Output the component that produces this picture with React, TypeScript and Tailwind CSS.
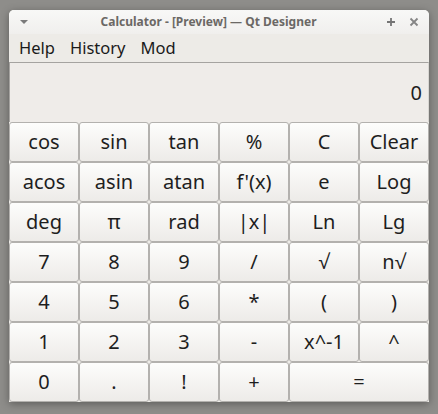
import React from 'react';

const rows: { label: string; span?: boolean }[][] = [
  [{ label: 'cos' }, { label: 'sin' }, { label: 'tan' }, { label: '%' }, { label: 'C' }, { label: 'Clear' }],
  [{ label: 'acos' }, { label: 'asin' }, { label: 'atan' }, { label: "f'(x)" }, { label: 'e' }, { label: 'Log' }],
  [{ label: 'deg' }, { label: 'π' }, { label: 'rad' }, { label: '|x|' }, { label: 'Ln' }, { label: 'Lg' }],
  [{ label: '7' }, { label: '8' }, { label: '9' }, { label: '/' }, { label: '√' }, { label: 'n√' }],
  [{ label: '4' }, { label: '5' }, { label: '6' }, { label: '*' }, { label: '(' }, { label: ')' }],
  [{ label: '1' }, { label: '2' }, { label: '3' }, { label: '-' }, { label: 'x^-1' }, { label: '^' }],
  [{ label: '0' }, { label: '.' }, { label: '!' }, { label: '+' }, { label: '=', span: true }],
];

function CalcButton({ label, span }: { label: string; span?: boolean }) {
  return (
    <button
      className={
        (span ? 'col-span-2 ' : '') +
        'h-[40px] border border-[#b3b1ae] rounded-[3px] bg-gradient-to-b from-[#fdfdfc] to-[#edebe8] text-[20px] text-[#1e1e1e] leading-none flex items-center justify-center'
      }
    >
      {label}
    </button>
  );
}

export default function App() {
  return (
    <div
      className="w-[438px] h-[414px] bg-[#8e8d8a] pt-[10px] pl-[9px] overflow-hidden"
      style={{ fontFamily: '"Noto Sans", "Open Sans", sans-serif' }}
    >
      <div className="w-[420px] rounded-t-[5px] bg-[#edebe7] shadow-[0_2px_8px_rgba(0,0,0,0.35)]">
        {/* title bar */}
        <div className="h-[24px] rounded-t-[5px] bg-gradient-to-b from-[#f8f8f7] to-[#f0efed] flex items-center px-[10px]">
          <svg width="10" height="6" viewBox="0 0 10 6">
            <path d="M1 1 L9 1 L5 5 Z" fill="#7a7a7a" />
          </svg>
          <div className="flex-1 text-center text-[12px] font-bold text-[#6b6865] pl-[2px]">
            Calculator - [Preview] — Qt Designer
          </div>
          <svg width="10" height="10" viewBox="0 0 10 10" className="mr-[13px]">
            <path d="M5 1 V9 M1 5 H9" stroke="#757575" strokeWidth="1.8" />
          </svg>
          <svg width="10" height="10" viewBox="0 0 10 10">
            <path d="M1.5 1.5 L8.5 8.5 M8.5 1.5 L1.5 8.5" stroke="#858585" strokeWidth="1.8" />
          </svg>
        </div>
        {/* menu bar */}
        <div className="h-[28px] flex items-center gap-[15px] pl-[10px] text-[16.5px] text-[#1a1a1a]">
          <span>Help</span>
          <span>History</span>
          <span>Mod</span>
        </div>
        {/* display */}
        <div className="h-[60px] border-t border-l border-[#a5a3a0] border-r border-r-[#d8d6d2] bg-[#efece9] flex items-center justify-end pr-[6px] pt-[1px] text-[20px] text-[#1e1e1e]">
          0
        </div>
        {/* keypad */}
        <div className="grid grid-cols-6">
          {rows.map((row, i) =>
            row.map((b, j) => <CalcButton key={i + '-' + j} label={b.label} span={b.span} />)
          )}
        </div>
      </div>
    </div>
  );
}
